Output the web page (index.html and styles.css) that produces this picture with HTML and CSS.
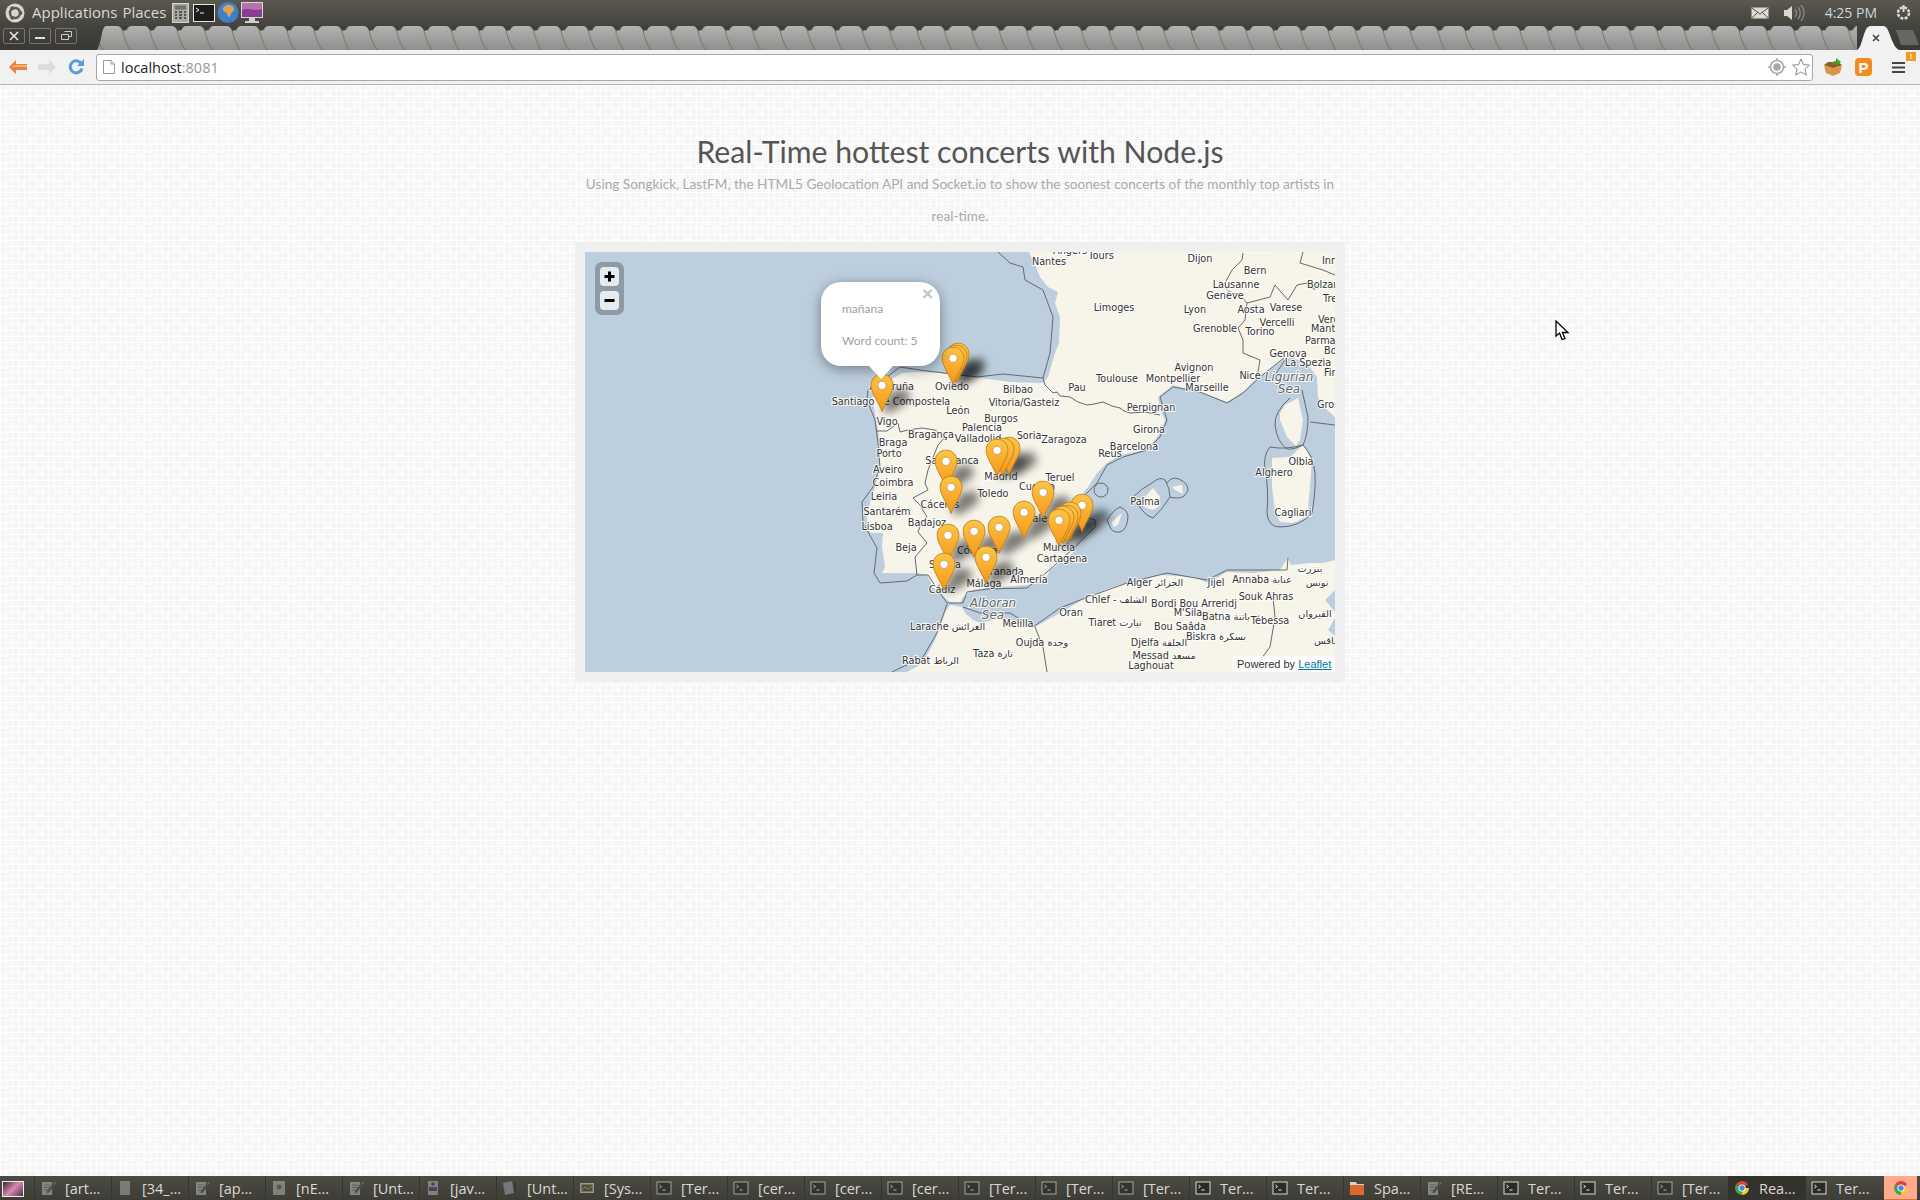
FILE: index.html
```html
<!DOCTYPE html>
<html lang="en">
<head>
  <meta charset="UTF-8" />
  <title>Real-Time hottest concerts with Node.js</title>
  <link rel="stylesheet" href="styles.css">
</head>
<body>
  <svg class="defs" width="0" height="0">
    <defs>
      <linearGradient id="pinFill" x1="0" y1="0" x2="0" y2="1">
        <stop offset="0" stop-color="#fcc646"/>
        <stop offset="1" stop-color="#f5961a"/>
      </linearGradient>
      <linearGradient id="tabFill" x1="0" y1="0" x2="0" y2="1">
        <stop offset="0" stop-color="#b2b2b0"/>
        <stop offset="1" stop-color="#8e8e8c"/>
      </linearGradient>
      <filter id="blur" x="-100%" y="-100%" width="300%" height="300%">
        <feGaussianBlur stdDeviation="4"/>
      </filter>
      <symbol id="pin" viewBox="0 0 25 41">
        <path d="M12.5 .7C5.9 .7 .8 5.8 .8 12.5c0 7.6 8.6 19 11.7 27.8C15.6 31.5 24.2 20.1 24.2 12.5 24.2 5.8 19.1 .7 12.5 .7z" fill="url(#pinFill)" stroke="#c4821c"/>
        <circle cx="12.5" cy="12.5" r="4.4" fill="#fff" stroke="#b98a3a" stroke-width=".7"/>
      </symbol>
      <g id="pinShadow">
        <path d="M0 27L9 6 25 4 28 15 10 27z" fill="#000" opacity=".5" filter="url(#blur)"/>
      </g>
      <symbol id="i-term" viewBox="0 0 16 16">
        <rect x="1" y="2" width="14" height="12" fill="#2b2b2b" stroke="#d8d8d4"/>
        <path d="M3.5 5l2 1.5-2 1.5M6.5 10h3" fill="none" stroke="#eee"/>
      </symbol>
      <symbol id="i-edit" viewBox="0 0 16 16">
        <rect x="2" y="2" width="10" height="13" fill="#a9a9a4"/>
        <path d="M4 5h6M4 7.5h6M4 10h4" stroke="#6d6d68"/>
        <path d="M7 11l6-8 2 1.500-6 8-2.500 1z" fill="#57534e"/>
        <path d="M13 3l2 1.500 .8-1.300-1.800-1.300z" fill="#b06aa8"/>
      </symbol>
      <symbol id="i-page" viewBox="0 0 16 16">
        <rect x="3" y="1" width="10" height="14" fill="#9a9a95"/>
      </symbol>
      <symbol id="i-note" viewBox="0 0 16 16">
        <rect x="2" y="1" width="12" height="14" fill="#a3a39e"/>
        <circle cx="8" cy="7" r="2.500" fill="#5b6a4f"/>
      </symbol>
      <symbol id="i-java" viewBox="0 0 16 16">
        <rect x="3" y="1" width="10" height="14" fill="#a3a39e"/>
        <rect x="4" y="7" width="8" height="4" fill="#5b3a86"/>
        <circle cx="8" cy="4" r="1.800" fill="#4b4b55"/>
      </symbol>
      <symbol id="i-stack" viewBox="0 0 16 16">
        <path d="M1 3l9-2 2 12-9 2z" fill="#8f96a0"/>
        <path d="M12 2h2v10h-2z" fill="#33332f"/>
      </symbol>
      <symbol id="i-sys" viewBox="0 0 16 16">
        <rect x="1" y="3" width="14" height="10" fill="#c5c5bf"/>
        <rect x="2.500" y="4.500" width="11" height="7" fill="#55553a"/>
        <path d="M3 10l3-3 3 2 4-3" fill="none" stroke="#a5a36a"/>
      </symbol>
      <symbol id="i-folder" viewBox="0 0 16 16">
        <path d="M1 2h6l1 2h7v11H1z" fill="#d8d4cc"/>
        <rect x="1" y="5" width="14" height="10" fill="#dc6a2e"/>
      </symbol>
      <symbol id="i-chrome" viewBox="0 0 16 16">
        <path d="M8 8L2 4.500A7 7 0 0 1 14.100 4.500z" fill="#dd4438"/>
        <path d="M8 8h7A7 7 0 0 1 8 15z" fill="#f7c82f"/>
        <path d="M8 8v7A7 7 0 0 1 2 4.500z" fill="#3fa34d"/>
        <circle cx="8" cy="8" r="3.600" fill="#fff"/>
        <circle cx="8" cy="8" r="2.700" fill="#4a87d8"/>
      </symbol>
      <pattern id="tabTile" patternUnits="userSpaceOnUse" width="27.400" height="24">
        <rect width="27.400" height="24" fill="url(#tabFill)"/>
        <path d="M0 0H7C4.500 0 3 2 2 4.500L0 4zM20 0c3 0 4.500 2 5.600 5l1.800-.5V0z" fill="#3f3e39"/>
        <path d="M25.600 5c1.600 6 3.400 14 8 19M-1.800 5C-.2 11 1.600 19 6.200 24" fill="none" stroke="#757572"/>
      </pattern>
    </defs>
  </svg>

  <div class="panel">
    <svg class="ubuntu" width="20" height="20" viewBox="0 0 20 20">
      <circle cx="10" cy="10" r="9.500" fill="#d8d5cc"/>
      <circle cx="10" cy="10" r="5" fill="none" stroke="#5a574f" stroke-width="2.400"/>
      <circle cx="15.500" cy="10" r="1.900" fill="#5a574f"/>
      <circle cx="7.200" cy="5.200" r="1.900" fill="#5a574f"/>
      <circle cx="7.200" cy="14.800" r="1.900" fill="#5a574f"/>
    </svg>
    <span class="panel-menu">Applications</span>
    <span class="panel-menu places">Places</span>
    <svg class="launch calc" width="17" height="20" viewBox="0 0 17 20">
      <rect x=".5" y=".5" width="16" height="19" fill="#a9a9a3" stroke="#d5d5d0"/>
      <rect x="3" y="2.500" width="11" height="4" fill="#6d7268"/>
      <path d="M3 9h2M7 9h3M12 9h2M3 12h2M7 12h3M12 12h2M3 15h2M7 15h3M12 15h2" stroke="#565650" stroke-width="2"/>
    </svg>
    <svg class="launch" width="22" height="18" viewBox="0 0 22 18">
      <rect x=".5" y=".5" width="21" height="17" fill="#1c1c1c" stroke="#e6e6e2"/>
      <path d="M3 4l3 2-3 2M7 9h4" fill="none" stroke="#eee"/>
    </svg>
    <svg class="launch" width="22" height="21" viewBox="0 0 22 21">
      <circle cx="11" cy="10.500" r="10.500" fill="#3f7fca"/>
      <path d="M9 3c4-1 8 1 8 4 0 3-2 2-3 5s-2 4-3 2-1-3-3-4-3-3-1-5z" fill="#d9a458"/>
    </svg>
    <svg class="launch" width="22" height="22" viewBox="0 0 22 22">
      <rect x=".5" y=".5" width="21" height="15" fill="#8c3a92" stroke="#d6d6d2"/>
      <path d="M1 1h20v6C14 10 8 5 1 8z" fill="#b672b0"/>
      <path d="M8 16h6v3H8zM4 19h14v2H4z" fill="#cfcfca"/>
    </svg>
    <span class="panel-space"></span>
    <svg class="tray" width="18" height="12" viewBox="0 0 18 12">
      <rect x=".5" y=".5" width="17" height="11" fill="#dcd9d0"/>
      <path d="M1 1l8 6 8-6M1 11l6-6M17 11l-6-6" fill="none" stroke="#56544d"/>
    </svg>
    <svg class="tray" width="21" height="16" viewBox="0 0 21 16">
      <path d="M0 5h3l5-4v14l-5-4H0z" fill="#dcd9d0"/>
      <path d="M11 4c2 2 2 6 0 8M14 2c3 3 3 9 0 12M17 0c4 4 4 12 0 16" fill="none" stroke="#8f8d86" stroke-width="1.300"/>
    </svg>
    <span class="clock">4:25 PM</span>
    <svg class="power" width="17" height="17" viewBox="0 0 17 17">
      <circle cx="8.500" cy="9" r="5.500" fill="none" stroke="#dcd9d0" stroke-width="2.600" stroke-dasharray="3 1.300"/>
      <path d="M8.500 1v7" stroke="#dcd9d0" stroke-width="2"/>
    </svg>
  </div>

  <div class="tabstrip">
    <div class="win-btns">
      <span class="win-btn"><svg width="10" height="10" viewBox="0 0 10 10"><path d="M1 1l8 8M9 1l-8 8" stroke="#eee" stroke-width="1.500"/></svg></span>
      <span class="win-btn"><svg width="10" height="10" viewBox="0 0 10 10"><path d="M0 7h10" stroke="#ddd" stroke-width="2"/></svg></span>
      <span class="win-btn"><svg width="11" height="10" viewBox="0 0 11 10"><path d="M3.500 .5h7v5h-3M.5 3.500h7v5h-7z" fill="none" stroke="#ccc"/></svg></span>
    </div>
    <svg class="tabs" width="1760" height="24">
      <rect width="1760" height="24" fill="url(#tabTile)"/>
      <path d="M0 0H9C4 1 5 17 0 24z" fill="#3f3e39"/>
    </svg>
    <svg class="active-tab" width="42" height="25" viewBox="0 0 42 25">
      <path d="M0 25C6 22 6 2 13 1H27c6 1 7 20 15 24z" fill="#f2f2f2"/>
      <path d="M16 10l6 6M22 10l-6 6" stroke="#444" stroke-width="1.600"/>
    </svg>
    <svg class="new-tab" width="24" height="15" viewBox="0 0 24 15">
      <path d="M1 0H18L24 15H6z" fill="#666662"/>
    </svg>
  </div>

  <div class="toolbar">
    <svg class="nav back" width="18" height="14" viewBox="0 0 18 14">
      <path d="M0 7L7 0V4H18V10H7V14z" fill="#ea823c"/>
      <path d="M7 5H18V7H2z" fill="#f6b27e"/>
    </svg>
    <svg class="nav forward" width="18" height="14" viewBox="0 0 18 14">
      <path d="M18 7L11 0V4H0V10H11V14z" fill="#dcdcda"/>
    </svg>
    <svg class="nav reload" width="16" height="16" viewBox="0 0 16 16">
      <path d="M13.500 5A6 6 0 1 0 14 9.500" fill="none" stroke="#5b9bdc" stroke-width="3"/>
      <path d="M16 0v7H9z" fill="#5b9bdc"/>
    </svg>
    <div class="omnibox">
      <svg class="page-icon" width="12" height="14" viewBox="0 0 12 14">
        <path d="M.5 .5H8L11.500 4V13.500H.5z" fill="#fff" stroke="#9a9a9a"/>
        <path d="M8 .5V4H11.500" fill="none" stroke="#9a9a9a"/>
      </svg>
      <span class="host">localhost<span class="port">:8081</span></span>
      <svg class="target" width="18" height="18" viewBox="0 0 18 18">
        <circle cx="9" cy="9" r="6.500" fill="none" stroke="#a8a8a8" stroke-width="1.600"/>
        <circle cx="9" cy="9" r="3.800" fill="#a8a8a8"/>
        <path d="M9 0v3M9 15v3M0 9h3M15 9h3" stroke="#a8a8a8" stroke-width="1.600"/>
      </svg>
      <svg class="star" width="18" height="18" viewBox="0 0 18 18">
        <path d="M9 1l2.400 5.600 6.100.5-4.600 4 1.400 6L9 13.900 3.700 17.100l1.400-6-4.600-4 6.100-.5z" fill="#fff" stroke="#8a8a8a"/>
      </svg>
    </div>
    <svg class="ext-box" width="20" height="18" viewBox="0 0 20 18">
      <path d="M1 7L10 10 19 7 17 15 10 18 3 15z" fill="#d9964a"/>
      <path d="M1 7l4-3h10l4 3-9 3z" fill="#8a5a28"/>
      <path d="M9 8c0-4 2-5 4-5V0l5 4-5 4V5c-1 0-3 1-4 3z" fill="#3da52e"/>
    </svg>
    <span class="ext-p">P</span>
    <svg class="menu" width="13" height="11" viewBox="0 0 13 11">
      <path d="M0 1h13M0 5.500h13M0 10h13" stroke="#444" stroke-width="2"/>
    </svg>
    <span class="menu-badge">!</span>
  </div>

  <div class="page">
    <h1>Real-Time hottest concerts with Node.js</h1>
    <p class="intro">Using Songkick, LastFM, the HTML5 Geolocation API and Socket.io to show the soonest concerts of the monthly top artists in real-time.</p>
    <div class="map-frame">
      <div class="map">
        <svg class="map-svg" width="750" height="420" viewBox="585 252 750 420">
          <rect x="585" y="252" width="750" height="420" fill="#bdcfde"/>
          <g class="land">
            <path d="M1028 250L1036 267 1040 277 1048 287 1058 292 1055 303 1060 317 1059 343 1055 353 1048 377 1043 383 1010 382 973 377 940 373 917 372 903 373 895 377 884 384 872 398 876 418 880 443 880 467 875 487 872 497 867 513 867 530 872 533 883 533 882 547 885 567 882 573 917 573 927 575 933 587 940 593 950 602 960 603 963 597 973 590 1000 587 1027 585 1045 580 1050 570 1073 553 1075 543 1087 530 1086 520 1075 510 1080 497 1088 487 1097 473 1107 463 1120 455 1147 450 1160 433 1165 420 1160 410 1158 397 1173 385 1200 392 1227 402 1243 392 1255 380 1273 367 1285 358 1293 358 1307 363 1317 377 1318 397 1327 410 1335 417 1340 417 1340 250z"/>
            <path d="M907 672L923 663 935 640 945 613 950 605 962 607 965 613 973 620 980 623 1003 618 1023 623 1035 627 1060 613 1087 597 1110 588 1130 582 1160 575 1193 577 1208 583 1227 572 1253 573 1280 570 1288 558 1291 565 1310 563 1323 563 1335 560 1340 560 1340 672z"/>
            <path d="M1280 413L1285 405 1298 398 1303 420 1300 440 1296 446 1287 437 1280 420z"/>
            <path d="M1272 458L1290 457 1303 445 1312 460 1310 487 1307 517 1293 523 1280 522 1275 510 1272 487z"/>
            <path d="M1142 500L1153 488 1160 497 1158 507 1153 510 1145 507z"/>
            <path d="M1172 487L1182 485 1183 494 1175 490z"/>
            <path d="M1112 522L1122 513 1118 525 1113 527z"/>
          </g>
          <path d="M1335 590L1325 600 1335 612zM1335 618L1328 630 1335 636z" fill="#bdcfde"/>
          <g class="borders">
            <path d="M1045 385L1053 393 1057 392 1060 396 1070 397 1078 402 1087 405 1094 404 1103 402 1112 406 1120 408 1124 411 1130 413 1145 412 1160 415"/>
            <path d="M998 252L1010 263 1023 267 1025 280 1043 290 1053 317 1050 353 1043 378 1045 385"/>
            <path d="M1043 378L1003 374 977 377 960 375 920 370 900 367 887 377 868 390 867 400 875 420 878 443 880 467 873 487 862 502 863 523 877 548 874 573 880 583 907 581 917 575 928 575 940 593 947 603 963 603"/>
            <path d="M947 604L937 633 923 657 892 672"/>
            <path d="M877 431L887 431 898 423 900 432 908 430 922 428 935 430 945 437 938 445 932 460 928 470 925 483 928 490 913 498 920 505 927 517 921 524 918 532 927 543 915 557 917 575"/>
            <path d="M963 603L967 592 987 589 1027 588 1047 572 1075 547 1095 527 1095 520 1085 517 1085 495 1097 483 1107 465 1123 457 1147 450 1160 437 1167 420 1160 397 1173 387 1200 392 1227 403 1243 393 1260 377 1285 357"/>
            <path d="M963 607L980 613 1010 613 1033 627 1060 608 1088 597 1127 583 1167 573 1207 580 1227 570 1287 570 1288 558"/>
            <path d="M1035 627L1043 647 1047 672"/>
            <path d="M1273 597L1275 617 1270 647 1258 663 1258 672"/>
            <path d="M1247 303L1245 320 1238 328 1243 340 1243 353 1260 360 1257 377"/>
            <path d="M1243 253L1242 260 1232 270 1225 283 1227 290 1242 297 1247 303 1270 297 1275 285 1288 300 1297 285 1307 283 1315 290"/>
            <path d="M1303 252L1300 263 1323 270 1335 275"/>
            <path d="M1285 360L1273 378"/>
            <path d="M1302 390L1308 417Q1308 435 1303 445Q1293 450 1287 449Q1277 442 1275 425Q1274 412 1290 398"/>
            <path d="M1310 422L1335 425"/>
            <path d="M1303 445Q1285 450 1270 447Q1263 455 1265 470Q1269 490 1267 513Q1268 527 1280 527Q1300 527 1312 513Q1316 490 1315 473Q1313 455 1303 445z"/>
            <path d="M1133 497Q1142 488 1152 483Q1160 476 1165 480Q1170 488 1170 497Q1162 510 1153 518Q1146 516 1142 510Q1136 503 1133 497z"/>
            <path d="M1167 483Q1172 476 1179 479Q1188 483 1188 490Q1185 498 1178 498Q1172 498 1170 497"/>
            <path d="M1107 520Q1113 510 1120 507Q1128 510 1128 517Q1127 530 1120 532Q1112 533 1110 527z"/>
            <circle cx="1101" cy="490" r="7"/>
          </g>
          <g class="labels">
            <text x="1070" y="254">Angers</text><text x="1101" y="259">Tours</text><text x="1049" y="265">Nantes</text><text x="1200" y="262">Dijon</text>
            <text x="1257" y="252">Basel</text><text class="clip" x="1322" y="264">Innsbruck</text><text x="1255" y="274">Bern</text><text x="1236" y="288">Lausanne</text>
            <text class="clip" x="1307" y="288">Bolzano</text><text x="1225" y="299">Genève</text><text class="clip" x="1323" y="302">Trento</text>
            <text x="1114" y="311">Limoges</text><text x="1195" y="313">Lyon</text><text x="1251" y="313">Aosta</text><text x="1286" y="311">Varese</text>
            <text x="1277" y="326">Vercelli</text><text class="clip" x="1318" y="323">Verona</text><text class="clip" x="1311" y="332">Mantova</text><text x="1215" y="332">Grenoble</text><text x="1260" y="335">Torino</text>
            <text class="clip" x="1305" y="344">Parma</text><text class="clip" x="1324" y="354">Bologna</text><text x="1288" y="357">Genova</text><text x="1308" y="366">La Spezia</text>
            <text class="clip" x="1324" y="376">Firenze</text><text x="1194" y="371">Avignon</text><text x="1250" y="379">Nice</text>
            <text class="sea" x="1289" y="381">Ligurian</text><text class="sea" x="1289" y="393">Sea</text>
            <text x="1117" y="382">Toulouse</text><text x="1173" y="382">Montpellier</text><text x="1207" y="391">Marseille</text>
            <text x="1018" y="393">Bilbao</text><text x="1077" y="391">Pau</text><text x="1024" y="406">Vitoria/Gasteiz</text><text x="1151" y="411">Perpignan</text><text class="clip" x="1317" y="408">Grosseto</text>
            <text class="end" x="914" y="390">A Coruña</text><text x="952" y="390">Oviedo</text><text x="891" y="405">Santiago de Compostela</text><text x="958" y="414">León</text>
            <text x="887" y="425">Vigo</text><text x="931" y="438">Bragança</text><text x="893" y="446">Braga</text><text x="889" y="457">Porto</text><text x="888" y="473">Aveiro</text>
            <text x="893" y="486">Coimbra</text><text x="884" y="500">Leiria</text><text x="887" y="515">Santarém</text><text x="877" y="530">Lisboa</text>
            <text x="952" y="464">Salamanca</text><text x="940" y="508">Cáceres</text><text x="927" y="526">Badajoz</text><text x="906" y="551">Beja</text>
            <text class="clip" x="957" y="554">Córdoba</text><text x="945" y="568">Sevilla</text><text x="942" y="593">Cádiz</text>
            <text class="clip" x="910" y="630">Larache العرائش</text><text class="clip" x="902" y="664">Rabat الرباط</text>
            <text x="1001" y="422">Burgos</text><text x="982" y="431">Palencia</text><text x="978" y="442">Valladolid</text><text x="1029" y="439">Soria</text><text x="1064" y="443">Zaragoza</text>
            <text x="1149" y="433">Girona</text><text x="1134" y="450">Barcelona</text><text x="1110" y="457">Reus</text><text x="1001" y="480">Madrid</text><text x="1060" y="481">Teruel</text>
            <text x="993" y="497">Toledo</text><text class="clip" x="1019" y="490">Cuenca</text><text x="1047" y="522">Valencia</text><text x="1145" y="505">Palma</text>
            <text x="1274" y="476">Alghero</text><text x="1301" y="465">Olbia</text><text x="1293" y="516">Cagliari</text><text x="1059" y="551">Murcia</text><text x="1062" y="562">Cartagena</text>
            <text x="1003" y="575">Granada</text><text x="1029" y="583">Almería</text><text x="984" y="587">Málaga</text><text x="1155" y="586">Alger الجزائر</text><text x="1216" y="586">Jijel</text>
            <text x="1262" y="583">Annaba عنابة</text><text x="1310" y="572">بنزرت</text><text x="1317" y="586">تونس</text><text x="1116" y="603">Chlef - الشلف</text>
            <text class="sea" x="993" y="607">Alboran</text><text class="sea" x="993" y="619">Sea</text>
            <text x="1266" y="600">Souk Ahras</text><text x="1194" y="607">Bordj Bou Arreridj</text><text x="1188" y="616">M'Sila</text><text x="1071" y="616">Oran</text>
            <text x="1226" y="620">Batna باتنة</text><text x="1315" y="617">القيروان</text><text x="1018" y="627">Melilla</text><text x="1115" y="626">Tiaret تيارت</text><text x="1270" y="624">Tébessa</text>
            <text x="1180" y="630">Bou Saâda</text><text x="1216" y="640">Biskra بسكرة</text><text x="1159" y="646">Djelfa الجلفة</text><text x="1042" y="646">Oujda وجدة</text>
            <text x="993" y="657">Taza تازة</text><text x="1164" y="659">Messad مسعد</text><text x="1151" y="669">Laghouat</text><text class="clip" x="1314" y="644">سفاقس</text>
          </g>
          <g class="shadows">
            <use href="#pinShadow" x="958" y="354"/><use href="#pinShadow" x="953" y="358"/><use href="#pinShadow" x="882" y="385"/>
            <use href="#pinShadow" x="1009" y="448"/><use href="#pinShadow" x="997" y="450"/><use href="#pinShadow" x="946" y="461"/>
            <use href="#pinShadow" x="951" y="487"/><use href="#pinShadow" x="1043" y="492"/><use href="#pinShadow" x="1082" y="505"/>
            <use href="#pinShadow" x="1024" y="512"/><use href="#pinShadow" x="1070" y="513"/><use href="#pinShadow" x="1059" y="520"/>
            <use href="#pinShadow" x="999" y="527"/><use href="#pinShadow" x="974" y="531"/><use href="#pinShadow" x="948" y="535"/>
            <use href="#pinShadow" x="986" y="557"/><use href="#pinShadow" x="944" y="564"/>
          </g>
          <g class="pins">
            <use href="#pin" x="946.300" y="342.300" width="23.500" height="39"/>
            <use href="#pin" x="944.300" y="344.300" width="23.500" height="39"/>
            <use href="#pin" x="941.300" y="346.300" width="23.500" height="39"/>
            <use href="#pin" x="870.300" y="373.300" width="23.500" height="39"/>
            <use href="#pin" x="997.300" y="436.300" width="23.500" height="39"/>
            <use href="#pin" x="991.300" y="437.300" width="23.500" height="39"/>
            <use href="#pin" x="985.300" y="438.300" width="23.500" height="39"/>
            <use href="#pin" x="934.300" y="449.300" width="23.500" height="39"/>
            <use href="#pin" x="939.300" y="475.300" width="23.500" height="39"/>
            <use href="#pin" x="1031.300" y="480.300" width="23.500" height="39"/>
            <use href="#pin" x="1070.300" y="493.300" width="23.500" height="39"/>
            <use href="#pin" x="1012.300" y="500.300" width="23.500" height="39"/>
            <use href="#pin" x="1058.300" y="501.300" width="23.500" height="39"/>
            <use href="#pin" x="1055.300" y="504.300" width="23.500" height="39"/>
            <use href="#pin" x="1051.300" y="505.300" width="23.500" height="39"/>
            <use href="#pin" x="1047.300" y="508.300" width="23.500" height="39"/>
            <use href="#pin" x="987.300" y="515.300" width="23.500" height="39"/>
            <use href="#pin" x="962.300" y="519.300" width="23.500" height="39"/>
            <use href="#pin" x="936.300" y="523.300" width="23.500" height="39"/>
            <use href="#pin" x="974.300" y="545.300" width="23.500" height="39"/>
            <use href="#pin" x="932.300" y="552.300" width="23.500" height="39"/>
          </g>
        </svg>
        <div class="zoom-ctl">
          <span class="zoom-btn"><svg width="11" height="11" viewBox="0 0 11 11"><path d="M5.500 .5v10M.5 5.500h10" stroke="#000" stroke-width="3"/></svg></span>
          <span class="zoom-btn"><svg width="11" height="11" viewBox="0 0 11 11"><path d="M.5 5.500h10" stroke="#000" stroke-width="3"/></svg></span>
        </div>
        <div class="popup">
          <span class="popup-close">×</span>
          <p>mañana</p>
          <p>Word count: 5</p>
          <span class="popup-tip"></span>
        </div>
        <div class="attribution">Powered by <a href="#">Leaflet</a></div>
      </div>
    </div>
  </div>

  <svg class="cursor" width="15" height="21" viewBox="0 0 15 21">
    <path d="M1 1V16L4.500 13 7 19.500 10 18.500 7.500 12.500H13z" fill="#fff" stroke="#000" stroke-width="1.300"/>
  </svg>

  <div class="taskbar">
    <span class="show-desktop"></span>
    <span class="task min"><svg width="16" height="16"><use href="#i-edit"/></svg>[art...</span>
    <span class="task min"><svg width="16" height="16"><use href="#i-page"/></svg>[34_...</span>
    <span class="task min"><svg width="16" height="16"><use href="#i-edit"/></svg>[ap...</span>
    <span class="task min"><svg width="16" height="16"><use href="#i-note"/></svg>[nE...</span>
    <span class="task min"><svg width="16" height="16"><use href="#i-edit"/></svg>[Unt...</span>
    <span class="task min"><svg width="16" height="16"><use href="#i-java"/></svg>[jav...</span>
    <span class="task min"><svg width="16" height="16"><use href="#i-stack"/></svg>[Unt...</span>
    <span class="task min"><svg width="16" height="16"><use href="#i-sys"/></svg>[Sys...</span>
    <span class="task min"><svg width="16" height="16"><use href="#i-term"/></svg>[Ter...</span>
    <span class="task min"><svg width="16" height="16"><use href="#i-term"/></svg>[cer...</span>
    <span class="task min"><svg width="16" height="16"><use href="#i-term"/></svg>[cer...</span>
    <span class="task min"><svg width="16" height="16"><use href="#i-term"/></svg>[cer...</span>
    <span class="task min"><svg width="16" height="16"><use href="#i-term"/></svg>[Ter...</span>
    <span class="task min"><svg width="16" height="16"><use href="#i-term"/></svg>[Ter...</span>
    <span class="task min"><svg width="16" height="16"><use href="#i-term"/></svg>[Ter...</span>
    <span class="task"><svg width="16" height="16"><use href="#i-term"/></svg>Ter...</span>
    <span class="task"><svg width="16" height="16"><use href="#i-term"/></svg>Ter...</span>
    <span class="task"><svg width="16" height="16"><use href="#i-folder"/></svg>Spa...</span>
    <span class="task min"><svg width="16" height="16"><use href="#i-edit"/></svg>[RE...</span>
    <span class="task"><svg width="16" height="16"><use href="#i-term"/></svg>Ter...</span>
    <span class="task"><svg width="16" height="16"><use href="#i-term"/></svg>Ter...</span>
    <span class="task min"><svg width="16" height="16"><use href="#i-term"/></svg>[Ter...</span>
    <span class="task current"><svg width="16" height="16"><use href="#i-chrome"/></svg>Rea...</span>
    <span class="task"><svg width="16" height="16"><use href="#i-term"/></svg>Ter...</span>
    <span class="task-alert"><svg width="16" height="16"><use href="#i-chrome"/></svg></span>
  </div>
</body>
</html>
```

FILE: styles.css
```css
* {
  box-sizing: border-box;
}
body {
  margin: 0;
  height: 1200px;
  overflow: hidden;
  display: flex;
  flex-direction: column;
  font-family: Lato, sans-serif;
  background-color: #f8f8f8;
  background-image:
    linear-gradient(rgba(255, 255, 255, 0.8) 1px, transparent 1px),
    linear-gradient(90deg, rgba(255, 255, 255, 0.8) 1px, transparent 1px),
    repeating-conic-gradient(rgba(0, 0, 0, 0.012) 0 25%, transparent 0 50%);
  background-size: 6px 6px, 6px 6px, 18px 18px;
}
.defs {
  position: absolute;
}

.panel {
  height: 25px;
  flex: none;
  display: flex;
  align-items: center;
  padding-left: 5px;
  background: linear-gradient(#5a5850, #45443e);
  color: #dcd9d0;
  font-family: "Open Sans", sans-serif;
  font-size: 15px;
}
.panel-menu {
  margin: 0 0 2px 7px;
  white-space: nowrap;
}
.places {
  margin-left: 5px;
}
.launch {
  margin-left: 2px;
}
.calc {
  margin-left: 6px;
  margin-right: 2px;
}
.panel-space {
  flex: 1;
}
.tray {
  margin-right: 15px;
}
.clock {
  margin: 0 18px 0 5px;
  color: #cfd6dc;
  font-size: 14px;
}
.power {
  margin-right: 8px;
}

.tabstrip {
  height: 25px;
  flex: none;
  display: flex;
  align-items: flex-end;
  background: linear-gradient(#45443e, #393833);
}
.win-btns {
  width: 97px;
  height: 24px;
  flex: none;
  display: flex;
  gap: 4px;
  padding: 2px 0 0 3px;
}
.win-btn {
  width: 22px;
  height: 16px;
  display: flex;
  align-items: center;
  justify-content: center;
  border: 1px solid #76746d;
  border-radius: 2px;
}
.tabs {
  flex: none;
}
.active-tab {
  flex: none;
}
.new-tab {
  flex: none;
  margin: 0 0 5px -4px;
}

.toolbar {
  height: 35px;
  flex: none;
  display: flex;
  align-items: center;
  background: #f1f1f1;
  border-bottom: 1px solid #b4b4b4;
}
.back {
  margin-left: 9px;
}
.forward {
  margin-left: 11px;
}
.reload {
  margin-left: 12px;
}
.omnibox {
  width: 1717px;
  height: 27px;
  margin-left: 12px;
  flex: none;
  display: flex;
  align-items: center;
  padding-left: 6px;
  background: #fff;
  border: 1px solid #a8a8a8;
  border-radius: 3px;
}
.host {
  margin-left: 6px;
  flex: 1;
  color: #222;
  font-family: "Open Sans", sans-serif;
  font-size: 14.5px;
}
.port {
  color: #999;
}
.star {
  margin: 0 2px 0 6px;
}
.ext-box {
  margin-left: 10px;
}
.ext-p {
  width: 17px;
  height: 18px;
  margin-left: 12px;
  display: flex;
  align-items: center;
  justify-content: center;
  background: #f58a1f;
  border-radius: 4px;
  color: #fff;
  font-family: "Liberation Sans", sans-serif;
  font-weight: bold;
  font-size: 15px;
}
.menu {
  margin-left: 20px;
}
.menu-badge {
  width: 10px;
  height: 9px;
  margin: -22px 0 0 1px;
  display: flex;
  align-items: center;
  justify-content: center;
  background: #f39a1f;
  color: #fff;
  font-family: "Liberation Sans", sans-serif;
  font-weight: bold;
  font-size: 8px;
}

.page {
  flex: 1;
  display: flex;
  flex-direction: column;
  align-items: center;
}
h1 {
  margin: 49px 0 0;
  color: #555;
  font-weight: normal;
  font-size: 30.2px;
  line-height: 34px;
}
.intro {
  width: 770px;
  margin: 0;
  color: #aaa;
  font-size: 13.6px;
  line-height: 32px;
  text-align: center;
}
.map-frame {
  margin-top: 10px;
  padding: 10px;
  background: #f0f0f0;
}
.map {
  position: relative;
  width: 750px;
  height: 420px;
  overflow: hidden;
}
.map-svg {
  display: block;
}
.land {
  fill: #f7f4e9;
}
.borders {
  fill: none;
  stroke: #666a6e;
  stroke-width: 1;
  stroke-linejoin: round;
}
.labels text {
  fill: #333;
  font-family: "DejaVu Sans", sans-serif;
  font-size: 9.7px;
  text-anchor: middle;
  paint-order: stroke;
  stroke: rgba(255, 255, 255, 0.85);
  stroke-width: 2px;
}
.labels .clip {
  text-anchor: start;
}
.labels .end {
  text-anchor: end;
}
.labels .sea {
  fill: #666;
  font-style: italic;
  font-size: 12px;
}

.zoom-ctl {
  position: absolute;
  left: 10px;
  top: 10px;
  width: 29px;
  height: 53px;
  display: flex;
  flex-direction: column;
  align-items: center;
  gap: 5px;
  padding-top: 5px;
  background: rgba(0, 0, 0, 0.25);
  border-radius: 7px;
}
.zoom-btn {
  width: 19px;
  height: 19px;
  display: flex;
  align-items: center;
  justify-content: center;
  background: rgba(255, 255, 255, 0.8);
  border-radius: 4px;
}
.popup {
  position: absolute;
  left: 236px;
  top: 30px;
  width: 119px;
  height: 84px;
  padding: 0 0 0 21px;
  background: #fff;
  border-radius: 20px;
  box-shadow: 0 3px 14px rgba(0, 0, 0, 0.4);
  color: #a0a0a0;
  font-size: 12px;
}
.popup p {
  margin: 0;
  height: 32px;
  line-height: 32px;
  position: relative;
  top: 11px;
}
.popup-close {
  position: absolute;
  right: 7px;
  top: 1px;
  color: #c3c3c3;
  font-family: "Liberation Sans", sans-serif;
  font-weight: bold;
  font-size: 19px;
  line-height: 22px;
}
.popup-tip {
  position: absolute;
  left: 48px;
  top: 84px;
  width: 0;
  height: 0;
  border-left: 12px solid transparent;
  border-right: 12px solid transparent;
  border-top: 13px solid #fff;
}
.attribution {
  position: absolute;
  right: 0;
  bottom: 0;
  width: 103px;
  height: 16px;
  padding-left: 5px;
  background: rgba(255, 255, 255, 0.8);
  color: #333;
  font-family: "Liberation Sans", sans-serif;
  font-size: 11px;
  line-height: 17px;
  white-space: nowrap;
}
.attribution a {
  color: #0078a8;
}

.cursor {
  position: absolute;
  left: 1555px;
  top: 320px;
}

.taskbar {
  height: 24px;
  flex: none;
  display: flex;
  align-items: center;
  background: linear-gradient(#4b4a43, #3d3c36);
  color: #dcd9d0;
  font-family: "Open Sans", sans-serif;
  font-size: 14.5px;
}
.show-desktop {
  width: 22px;
  height: 16px;
  margin: 2px 10px 0 2px;
  flex: none;
  background: linear-gradient(135deg, #3a2230, #d88ab0 50%, #50304a);
  border: 1px solid #eee;
}
.task {
  width: 77px;
  height: 24px;
  flex: none;
  display: flex;
  align-items: center;
  gap: 9px;
  padding-left: 5px;
  border-left: 1px solid #35342f;
  white-space: nowrap;
}
.task.min svg {
  opacity: 0.65;
}
.task.current {
  background: #33322d;
}
.task-alert {
  width: 33px;
  height: 24px;
  margin-left: 2px;
  flex: none;
  display: flex;
  align-items: center;
  justify-content: center;
  background: #ffa98f;
  border-bottom: 1px solid #e8703c;
}
```
